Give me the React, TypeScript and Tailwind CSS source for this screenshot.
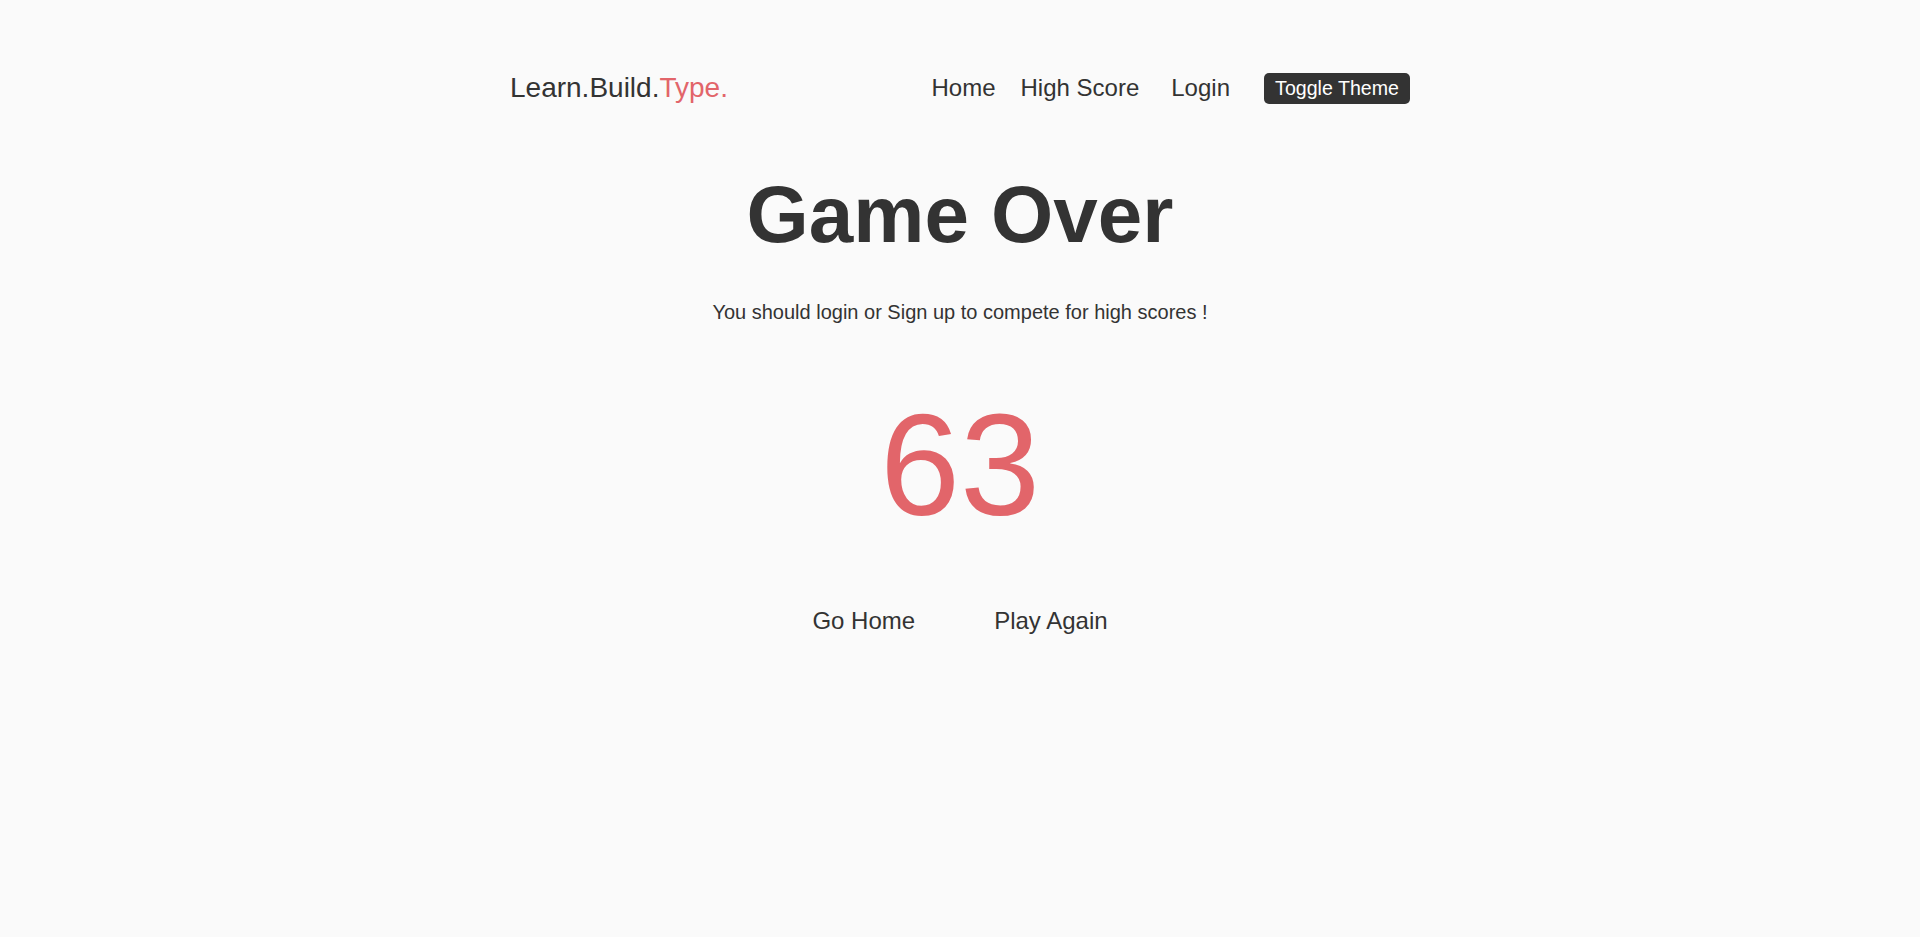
export default function App() {
  return (
    <div
      className="min-h-[937px] w-full bg-[#fafafa] pt-[72px] text-[#333333]"
      style={{ fontFamily: '"Liberation Sans", Arial, sans-serif' }}
    >
      <header className="mx-auto flex h-[32px] w-[900px] items-center justify-between">
        <div className="text-[28px] leading-[32px]">
          Learn.Build.<span className="text-[#e2656a]">Type.</span>
        </div>
        <nav className="flex items-center text-[24px] leading-[28px]">
          <a className="mb-[1px] cursor-pointer">Home</a>
          <a className="mb-[1px] ml-[25px] cursor-pointer">High Score</a>
          <a className="mb-[1px] ml-[32px] cursor-pointer">Login</a>
          <button className="ml-[34px] h-[31px] w-[146px] rounded-[5px] bg-[#333333] text-center text-[19.6px] leading-[22px] text-white">
            Toggle Theme
          </button>
        </nav>
      </header>

      <main className="flex flex-col items-center">
        <h1 className="mt-[71px] text-[80px] font-bold leading-none">Game Over</h1>
        <p className="mt-[42px] text-[20px] leading-[30px]">
          You should login or Sign up to compete for high scores !
        </p>
        <div className="mt-[67px] text-[144px] leading-none text-[#e2656a]">63</div>
        <div className="mt-[69px] flex gap-[79px] text-[24px] leading-[28px]">
          <button className="cursor-pointer">Go Home</button>
          <button className="cursor-pointer">Play Again</button>
        </div>
      </main>
    </div>
  )
}
